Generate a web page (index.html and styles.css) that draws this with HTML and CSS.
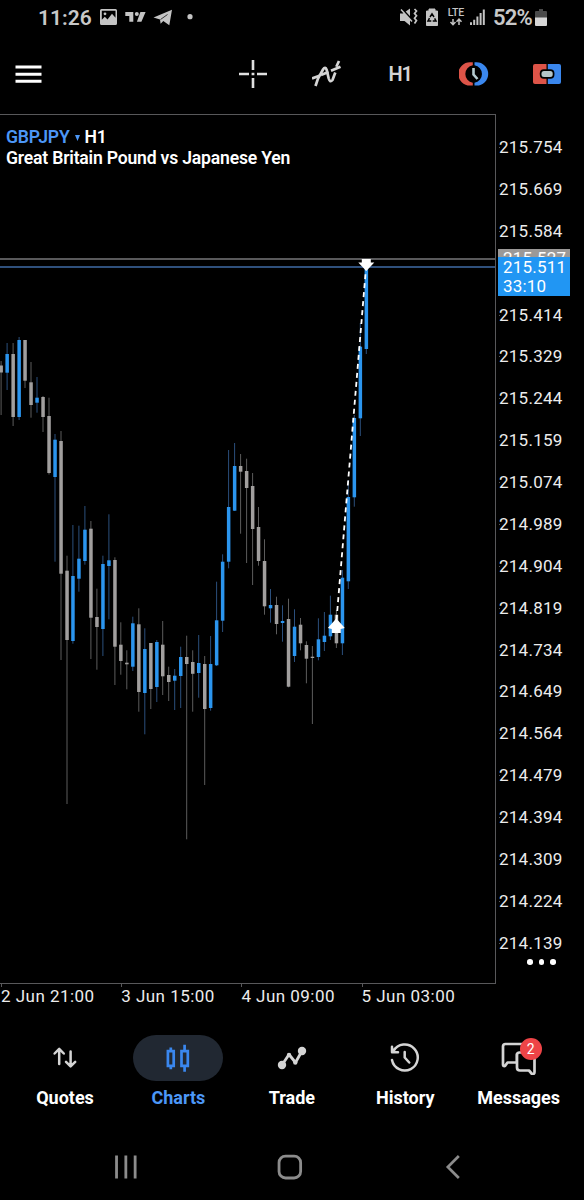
FILE: index.html
```html
<!DOCTYPE html>
<html lang="en">
<head>
  <meta charset="UTF-8">
  <meta name="viewport" content="width=device-width, initial-scale=1.0">
  <title>GBPJPY H1</title>
  <link rel="stylesheet" href="styles.css">
</head>
<body>
  <div class="page">
    <div class="status-bar">
      <span class="clock">11:26</span>
      <svg class="status-left" width="102" height="22" viewBox="98 7 102 22">
        <path fill="#c4c4c4" fill-rule="evenodd" d="M101.500 9h14a1.500 1.500 0 0 1 1.500 1.500v13a1.500 1.500 0 0 1-1.500 1.500h-14a1.500 1.500 0 0 1-1.500-1.500v-13a1.500 1.500 0 0 1 1.500-1.500zM101.800 10.800v9l3-3 2.700 2.600 4.500-5.600 3.500 4v-7zM103.600 13.800a1.400 1.400 0 1 0 2.800 0a1.400 1.400 0 1 0-2.800 0z"/>
        <path fill="#c4c4c4" d="M125.300 12h8v9.800h-4v-5.800h-4zM140.400 12h5.200l-4.200 9.800h-4.500z"/>
        <circle cx="136.800" cy="14" r="2" fill="#c4c4c4"/>
        <path fill="#c4c4c4" d="M153.500 17.500L172 9.800l-2.700 15.500-6-4.300-2.700 2.800-.6-4.400z"/>
        <path stroke="#111" stroke-width=".8" d="M160.500 19.500l7-5"/>
        <circle cx="190" cy="16.700" r="2.600" fill="#c4c4c4"/>
      </svg>
      <svg class="status-right" width="88" height="22" viewBox="398 7 88 22">
        <g fill="#c4c4c4">
          <path d="M400 13.500h3l7-5v17l-5.500-4.500h-4.500z"/>
          <path d="M426.500 11h2.500v-2h6v2h2.500v14.500h-11z" stroke="#c4c4c4" stroke-linejoin="round"/>
          <path d="M470 22.200h2v2.800h-2zM473.200 19.800h2v5.200h-2zM476.400 16.500h2v8.500h-2zM479.600 13h2v12h-2zM482.800 9.500h2v15.500h-2z"/>
        </g>
        <path stroke="#000" stroke-width="2" d="M402 9l10 11"/>
        <path stroke="#c4c4c4" stroke-width="1.500" d="M401 9.500l11 12"/>
        <path fill="none" stroke="#c4c4c4" stroke-width="1.700" d="M414.500 9l2 2-2 2.400 2 2.400-2 2.400 2 2.400-2 2.900"/>
        <path fill="none" stroke="#000" stroke-width="1.500" d="M430 17l2-3.200 2 3.200M434.600 18.300l1.400 2.600h-3.300M431.300 20.900H428l1.500-2.800"/>
        <text class="lte" x="447.800" y="16">LTE</text>
        <path fill="none" stroke="#c4c4c4" stroke-width="1.500" d="M453 19v5.500M450.500 22l2.500 2.700 2.500-2.700M459 25v-5.500M456.500 21.700l2.500-2.700 2.500 2.700"/>
      </svg>
      <span class="percent">52%</span>
      <svg width="12" height="18" viewBox="0 0 12 18">
        <path fill="#4a4a4a" d="M1 2h3V0h4v2h3q1 0 1 1v6H0V3q0-1 1-1z"/>
        <path fill="#d6d6d6" d="M0 8.500h12V16q0 1-1 1H1q-1 0-1-1z"/>
      </svg>
    </div>

    <div class="toolbar">
      <svg class="menu" width="28" height="20" viewBox="0 0 28 20">
        <path stroke="#fff" stroke-width="3" d="M1.500 3h26M1.500 10.200h26M1.500 17.300h26"/>
      </svg>
      <div class="tools">
        <div class="tool">
          <svg width="30" height="30" viewBox="-15 -15 30 30">
            <path stroke="#e0e0e0" stroke-width="2.600" d="M-14 0h10M4 0h10M0-14v10M0 4v10M-1.400 0h2.800"/>
          </svg>
        </div>
        <div class="tool">
          <svg width="30" height="30" viewBox="0 0 30 30">
            <g fill="none" stroke="#d4d4d4" stroke-width="2.700">
              <path d="M0 19.500L7.500 16.800M9 16l7.500-3M19 11.800l9.500-4"/>
              <path d="M3.500 27l2.500-7.500 5-9q2.300-3.500 3.700.5l2 8.500q1.300 4.500 3.800 1.500l2.800-7.500M24.300 7.800L27 2"/>
            </g>
          </svg>
        </div>
        <div class="tool timeframe">H1</div>
        <div class="tool">
          <svg width="30" height="26" viewBox="-15 -13 30 26">
            <path fill="#dd5448" d="M-1.200-11.800h-2.800a11.700 11.700 0 0 0 0 23.400h2.800V8.700a8.800 8.800 0 0 1 0-17.400z"/>
            <path fill="#3a87ee" d="M.5-11.800h2a11.700 11.700 0 0 1 0 23.400H.5V8.700a8.800 8.800 0 0 0 0-17.400z"/>
            <path fill="none" stroke="#b5cbd0" stroke-width="2.600" d="M-.5-6V.5l4 4.500"/>
          </svg>
        </div>
        <div class="tool">
          <svg width="28" height="20" viewBox="0 0 28 20">
            <path fill="#dd5448" d="M2 0h11.500v20H2q-2 0-2-2V2q0-2 2-2z"/>
            <path fill="#3a87ee" d="M14.800 0H26q2 0 2 2v16q0 2-2 2H14.800z"/>
            <rect x="6.800" y="5.300" width="14.600" height="9.400" rx="4" fill="#000"/>
            <rect x="8.500" y="7" width="11.200" height="6" rx="2.500" fill="#b5c5c9"/>
          </svg>
        </div>
      </div>
    </div>

    <div class="chart">
      <div class="plot">
        <div class="symbol"><span class="pair">GBPJPY</span><svg width="5" height="6" viewBox="0 0 5 6"><path fill="#4c97f7" d="M0 0h5L2.500 6z"/></svg><span>H1</span></div>
        <div class="description">Great Britain Pound vs Japanese Yen</div>
        <svg class="candles" id="candles" width="496" height="870" viewBox="0 114 496 870"></svg>
      </div>
      <div class="price-axis" id="price-axis">
        <div class="ask">215.527</div>
        <div class="bid">215.511<br>33:10</div>
        <div class="more"><i></i><i></i><i></i></div>
      </div>
    </div>
    <div class="time-axis">
      <span>2 Jun 21:00</span><span>3 Jun 15:00</span><span>4 Jun 09:00</span><span>5 Jun 03:00</span>
    </div>

    <div class="tabs">
      <div class="tab">
        <div class="tab-icon">
          <svg width="30" height="30" viewBox="0 0 30 30">
            <path fill="none" stroke="#d4d4d4" stroke-width="2.500" stroke-linecap="round" stroke-linejoin="round" d="M9.200 21V6M4.600 10.500L9.200 5.800l4.600 4.700M20.600 8.500V23M16 18.800l4.600 4.600 4.600-4.600"/>
          </svg>
        </div>
        <span>Quotes</span>
      </div>
      <div class="tab active">
        <div class="tab-icon">
          <svg width="30" height="30" viewBox="0 0 30 30">
            <path fill="none" stroke="#3a87ee" stroke-width="2.700" d="M4.900 8.100h5.800v14.800H4.900zM7.800 4.500v3.500M7.800 23v3.200M18.500 8.100h6.300v14.800H18.500zM21.600 1.800V8M21.600 23v5.800"/>
          </svg>
        </div>
        <span>Charts</span>
      </div>
      <div class="tab">
        <div class="tab-icon">
          <svg width="30" height="30" viewBox="0 0 30 30">
            <path fill="none" stroke="#d4d4d4" stroke-width="2.800" stroke-linejoin="round" d="M5 22l7-10.500 6.500 8L25 8"/>
            <circle cx="5" cy="22" r="4.200" fill="#d4d4d4"/>
            <circle cx="12" cy="12" r="2.200" fill="#d4d4d4"/>
            <circle cx="18.300" cy="19.500" r="2.200" fill="#d4d4d4"/>
            <circle cx="25" cy="8" r="4.200" fill="#d4d4d4"/>
          </svg>
        </div>
        <span>Trade</span>
      </div>
      <div class="tab">
        <div class="tab-icon">
          <svg width="30" height="30" viewBox="0 0 30 30">
            <path fill="none" stroke="#d4d4d4" stroke-width="2.500" stroke-linecap="round" stroke-linejoin="round" d="M2 17A13 13 0 1 0 3.500 8M2 3.800v5.500h6M14.700 9v5.500l4.500 5"/>
          </svg>
        </div>
        <span>History</span>
      </div>
      <div class="tab">
        <div class="tab-icon">
          <svg width="36" height="34" viewBox="0 0 36 34">
            <g fill="#000" stroke="#d4d4d4" stroke-width="2.700" stroke-linejoin="round">
              <path d="M27 13V5q0-2-2-2H4.500Q2 3 2 5.500v18q0 2 2 1.500l2.500-3.500H16V13z"/>
              <path d="M18.500 11.500H31.500q2 0 2 2V31q0 2.500-2.500 2l-3-3.500h-9q-3 0-3-3V14q0-2.500 2.500-2.500z"/>
            </g>
          </svg>
          <span class="badge">2</span>
        </div>
        <span>Messages</span>
      </div>
    </div>

    <div class="system-nav">
      <svg width="24" height="26" viewBox="0 0 24 26">
        <path stroke="#8c8c8c" stroke-width="2.800" d="M2.700 1.500v23M12 1.500v23M21.300 1.500v23"/>
      </svg>
      <svg width="26" height="26" viewBox="0 0 26 26">
        <rect x="2.200" y="2.200" width="21.600" height="21.800" rx="6.500" fill="none" stroke="#8c8c8c" stroke-width="2.800"/>
      </svg>
      <svg width="16" height="26" viewBox="0 0 16 26">
        <path fill="none" stroke="#8c8c8c" stroke-width="2.700" d="M14 2L3 13l11 11"/>
      </svg>
    </div>
  </div>

  <script>
    // [direction, high, body top, body bottom, low]
    const candles = [
      ["d", 361, 365.5, 372.5, 415], ["u", 343, 354, 372.7, 390], ["d", 343, 354, 417, 426],
      ["u", 337, 340, 417, 420], ["d", 340, 340, 380.7, 388], ["d", 362, 382.3, 405, 417.7],
      ["u", 377, 397.7, 402.7, 412.7], ["d", 396, 397, 417, 432], ["d", 397.7, 416, 473, 474.5],
      ["u", 434, 439.7, 477, 561.7], ["d", 431, 441, 573.7, 660], ["d", 555.7, 570.7, 640, 804],
      ["u", 525, 576, 641, 643.7], ["u", 525.7, 558.7, 578.7, 591.7], ["u", 506, 529.7, 561, 564.7],
      ["d", 521, 528.7, 617.7, 659], ["d", 588.7, 617, 627, 669.7], ["u", 555.7, 564, 629, 656],
      ["u", 514.3, 560.3, 566, 619.3], ["d", 557.3, 560, 646.7, 685], ["d", 622.3, 644.7, 661, 674.7],
      ["d", 650.3, 662.7, 664.3, 689.3], ["u", 616.7, 623.3, 666.7, 671], ["d", 608.3, 624.3, 692, 711.7],
      ["u", 628.3, 649, 693, 734.3], ["d", 643, 643, 689, 709], ["u", 640, 642, 687, 702],
      ["d", 621, 644.7, 676.3, 695], ["d", 666.7, 675, 682, 701], ["u", 669, 675.7, 680.7, 710],
      ["u", 646.7, 657, 676, 708], ["d", 635.7, 657, 664, 839.3], ["d", 650.3, 662, 673.8, 711.7],
      ["u", 635, 663, 673, 697.7], ["d", 656, 664, 709, 785], ["u", 636, 664, 708, 710.7],
      ["u", 581.7, 620.3, 665.3, 666], ["u", 554.3, 561.7, 620.7, 632], ["u", 450, 507, 561.7, 568.3],
      ["u", 443, 466, 510.7, 511], ["d", 454, 466, 471.7, 533.7], ["d", 458.7, 471, 488, 563],
      ["d", 473, 486, 529, 585], ["d", 507, 527, 561, 565.7], ["d", 539.3, 561, 606.3, 614.7],
      ["u", 589, 605, 608.3, 622.7], ["d", 596.7, 605, 624, 634.3], ["u", 605.3, 621, 623, 641.7],
      ["d", 598.7, 619, 686.7, 687.3], ["u", 609.3, 626.7, 656, 662], ["d", 618, 624.7, 643.3, 650.3],
      ["d", 641.3, 645, 658.7, 683.3], ["d", 646, 656.7, 658, 724], ["u", 618.3, 639.3, 657, 660.3],
      ["u", 612, 635.7, 642, 651], ["u", 595.7, 614.7, 636.3, 640], ["d", 610, 614.7, 643.3, 648],
      ["u", 570, 577.7, 643.3, 655], ["u", 480, 497, 581.3, 589], ["u", 415, 418, 497.3, 506.7],
      ["u", 323, 346.7, 418.3, 436], ["u", 268, 268, 349, 354]
    ];

    let shapes = '<path class="ask-line" d="M0 259h495"/><path class="bid-line" d="M0 267h495"/>';
    candles.forEach(([dir, high, top, bottom, low], i) => {
      const x = 1.1 + i * 5.987;
      shapes += `<path class="wick ${dir}" d="M${x.toFixed(1)} ${high}V${low}"/>`;
      shapes += `<rect class="body ${dir}" x="${(x - 1.7).toFixed(1)}" y="${top}" width="3.5" height="${(bottom - top).toFixed(1)}"/>`;
    });
    // trade from entry arrow to exit arrow
    shapes += '<path class="trade" d="M336.500 620L366 268"/>';
    shapes += '<path class="arrow" d="M336.300 618.500l8.500 9.500-4 1v4h-9v-4l-4-1z"/>';
    shapes += '<path class="arrow" d="M361.800 259h9v3.500h3.500l-8 8.500-8-8.500h3.500z"/>';
    document.getElementById("candles").innerHTML = shapes;

    const axis = document.getElementById("price-axis");
    for (let i = 0; i < 20; i++) {
      const row = document.createElement("div");
      row.className = "price";
      // the row under the bid label stays empty
      if (i !== 3) row.textContent = (215.754 - i * 0.085).toFixed(3);
      axis.appendChild(row);
    }
  </script>
</body>
</html>
```
FILE: styles.css
```css
body {
  margin: 0;
  background-color: #000;
  color: #fff;
  font-family: Roboto, "Liberation Sans", sans-serif;
}

svg {
  display: block;
  flex: none;
}

.page {
  width: 584px;
  height: 1200px;
  display: flex;
  flex-direction: column;
  overflow: hidden;
}

.status-bar {
  height: 35px;
  display: flex;
  align-items: center;
  padding-left: 38px;
  color: #c8c8c8;
}

.clock {
  width: 60px;
  font-size: 21px;
  font-weight: 600;
}

.status-right {
  margin-left: 198px;
}

.lte {
  font-size: 10.5px;
  font-weight: 500;
  letter-spacing: -0.2px;
  fill: #c4c4c4;
}

.percent {
  width: 41.5px;
  margin-left: 7px;
  font-size: 22px;
  font-weight: 600;
  letter-spacing: -0.8px;
}

.toolbar {
  height: 79px;
  display: flex;
  align-items: center;
  justify-content: space-between;
  padding-left: 14px;
  padding-bottom: 2px;
  box-sizing: border-box;
}

.tools {
  display: flex;
}

.tool {
  width: 73.5px;
  display: flex;
  align-items: center;
  justify-content: center;
}

.timeframe {
  font-size: 20px;
  font-weight: 600;
  letter-spacing: -1px;
  color: #d4d4d4;
}

.chart {
  height: 870px;
  display: flex;
}

.plot {
  position: relative;
  width: 496px;
  box-sizing: border-box;
  border-top: 1px solid #58585a;
  border-right: 1px solid #58585a;
  border-bottom: 1px solid #58585a;
  padding: 12px 0 0 6px;
  font-size: 17.6px;
  font-weight: 600;
  line-height: 21px;
  letter-spacing: -0.2px;
}

.symbol {
  display: flex;
  align-items: center;
  gap: 5px;
}

.pair {
  color: #4c97f7;
}

.description {
  white-space: nowrap;
}

.candles {
  position: absolute;
  left: 0;
  top: -1px;
}

.ask-line {
  stroke: #77777a;
  stroke-width: 1.5;
}

.bid-line {
  stroke: #3f6ba6;
  stroke-width: 1.5;
}

.wick {
  stroke-width: 1;
}

.wick.u {
  stroke: #2b4f7c;
}

.wick.d {
  stroke: #5c5c5c;
}

.body.u {
  fill: #2b95ee;
}

.body.d {
  fill: #a19f9e;
}

.trade {
  stroke: #fff;
  stroke-width: 1.8;
  stroke-dasharray: 5 4;
}

.arrow {
  fill: #fff;
}

.price-axis {
  position: relative;
  flex: 1;
  padding-top: 12px;
}

.price {
  height: 41.89px;
  line-height: 42px;
  margin-left: 3px;
  font-size: 17px;
  letter-spacing: 0.25px;
  color: #ececec;
  background: linear-gradient(#58585a, #58585a) 0 21px / 1px 1px no-repeat;
}

.ask,
.bid {
  position: absolute;
  left: 1.5px;
  width: 67px;
  padding-left: 5.5px;
  font-size: 17px;
  letter-spacing: 0.2px;
  line-height: 19px;
}

.ask {
  top: 135px;
  height: 20px;
  background-color: #9b9998;
}

.bid {
  top: 143px;
  height: 38px;
  padding-top: 1px;
  background-color: #2196f3;
  z-index: 1;
}

.more {
  position: absolute;
  left: 31px;
  top: 845px;
  display: flex;
  gap: 6px;
}

.more i {
  width: 5.5px;
  height: 5.5px;
  border-radius: 50%;
  background-color: #fff;
}

.time-axis {
  height: 42px;
  display: flex;
  font-size: 17px;
  line-height: 25px;
  letter-spacing: 0.47px;
  color: #ececec;
}

.time-axis span {
  width: 120.2px;
  background: linear-gradient(#58585a, #58585a) 1px 0 / 1px 3px no-repeat;
  text-indent: 1px;
  white-space: nowrap;
}

.tabs {
  height: 108px;
  display: flex;
  padding: 9px 8.7px 0 8.3px;
  box-sizing: border-box;
}

.tab {
  flex: 1;
  display: flex;
  flex-direction: column;
  align-items: center;
  gap: 6px;
  font-size: 18px;
  font-weight: 700;
  line-height: 22px;
}

.tab-icon {
  position: relative;
  width: 90px;
  height: 46px;
  border-radius: 23px;
  display: flex;
  align-items: center;
  justify-content: center;
}

.active {
  color: #4c97f7;
}

.active .tab-icon {
  background-color: #212832;
}

.badge {
  position: absolute;
  left: 46px;
  top: 3px;
  width: 22px;
  height: 22px;
  border-radius: 50%;
  background-color: #ee4447;
  color: #fff;
  font-size: 14px;
  font-weight: 400;
  text-align: center;
}

.system-nav {
  flex: 1;
  display: flex;
  align-items: center;
  padding: 0 49px 0 44px;
}

.system-nav svg {
  flex: 1;
}
```
